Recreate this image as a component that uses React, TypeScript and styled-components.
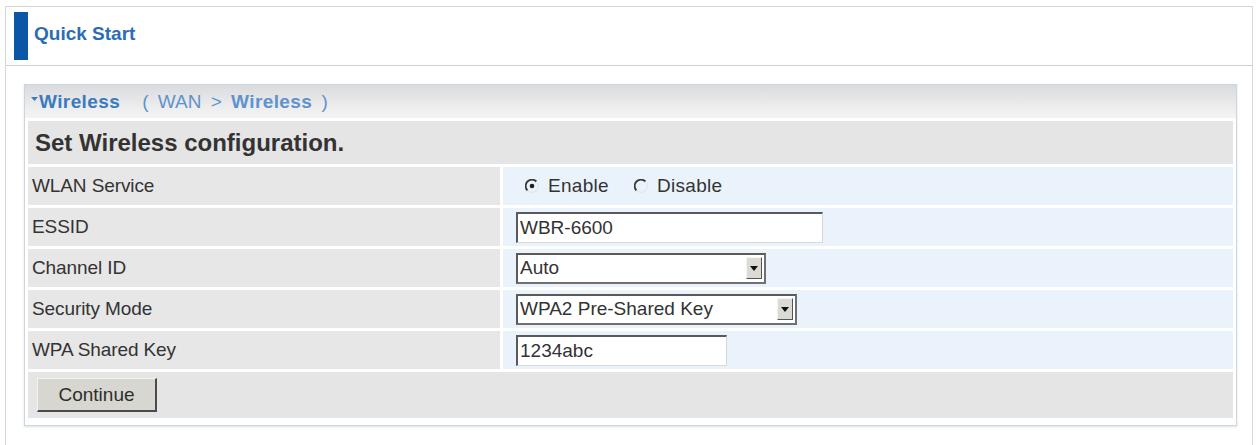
import React from "react";
import styled, { createGlobalStyle } from "styled-components";

const GlobalStyle = createGlobalStyle`
  html, body {
    margin: 0;
    padding: 0;
    background: #fff;
    font-family: "Liberation Sans", Arial, sans-serif;
  }
`;

const Frame = styled.div`
  margin: 6px 3px 0 5px;
  height: 460px;
  border: 1px solid #d6d6d6;
  border-bottom: none;
`;

const TopBar = styled.div`
  display: flex;
  align-items: center;
  gap: 6px;
  height: 58px;
  padding: 0 8px;
  border-bottom: 1px solid #d0d0d0;
`;

const Accent = styled.div`
  width: 14px;
  height: 48px;
  background: #0c56a6;
`;

const TopTitle = styled.div`
  font-size: 19px;
  font-weight: 700;
  color: #2b6db3;
  margin-top: -4px;
`;

const Panel = styled.div`
  margin: 18px 15px 0 18px;
  border: 1px solid #cdd6de;
  box-shadow: 0 1px 2px rgba(150, 170, 190, 0.35);
  background: #fff;
`;

const PanelHead = styled.div`
  display: flex;
  align-items: center;
  height: 33px;
  padding-left: 6px;
  background: linear-gradient(#dadbde, #eeeeef 70%, #f3f3f3);
  color: #3a7bc0;
  font-size: 19px;
`;

const Caret = styled.svg`
  margin-right: 1px;
  align-self: flex-start;
  margin-top: 12px;
`;

const Bold = styled.span`
  font-weight: 700;
  letter-spacing: 0.4px;
`;

const Crumb = styled.span`
  margin-left: 22px;
  color: #5f93cc;
  word-spacing: 4px;
`;

const Body = styled.div`
  display: grid;
  grid-template-columns: 472px 1fr;
  gap: 3px;
  padding: 3px 3px 7px;
`;

const Wide = styled.div<{ $h: number }>`
  grid-column: 1 / -1;
  height: ${(p) => p.$h}px;
  display: flex;
  align-items: center;
  background: #e5e5e5;
`;

const SectionTitle = styled.div`
  font-size: 24px;
  font-weight: 700;
  color: #333;
  padding-left: 7px;
`;

const Label = styled.div`
  height: 38px;
  display: flex;
  align-items: center;
  padding-left: 4px;
  background: #e7e7e7;
  color: #333;
  font-size: 19px;
  letter-spacing: -0.1px;
`;

const Value = styled.div`
  height: 38px;
  display: flex;
  align-items: center;
  padding-left: 13px;
  background: #eaf3fc;
  color: #333;
  font-size: 19px;
`;

const RadioGroup = styled.div`
  display: flex;
  align-items: center;
  padding-left: 9px;
`;

const RadioOption = styled.label`
  display: flex;
  align-items: center;
  gap: 9px;
  margin-right: 25px;
  letter-spacing: 0.3px;
`;

const TextBox = styled.div<{ $w: number }>`
  width: ${(p) => p.$w}px;
  height: 31px;
  box-sizing: border-box;
  display: flex;
  align-items: center;
  padding-left: 2px;
  background: #fff;
  border-top: 2px solid #5a5a5a;
  border-left: 2px solid #5a5a5a;
  border-right: 1px solid #d8d8d8;
  border-bottom: 1px solid #d8d8d8;
  font-size: 19px;
  color: #333;
`;

const SelectBox = styled(TextBox)`
  justify-content: space-between;
  padding-right: 2px;
  border-right: 2px solid #707070;
  border-bottom: 2px solid #707070;
`;

const Arrow = styled.div`
  width: 16px;
  height: 22px;
  box-sizing: border-box;
  display: flex;
  align-items: center;
  justify-content: center;
  background: #dcdad4;
  border-top: 1px solid #f4f4f4;
  border-left: 1px solid #f4f4f4;
  border-right: 1px solid #555;
  border-bottom: 1px solid #555;
`;

const ContinueButton = styled.button`
  margin-left: 9px;
  width: 120px;
  height: 34px;
  background: #d8d6d0;
  border-top: 1px solid #f2f2f2;
  border-left: 1px solid #f2f2f2;
  border-right: 2px solid #4a4a4a;
  border-bottom: 2px solid #4a4a4a;
  font-family: "Liberation Sans", Arial, sans-serif;
  font-size: 19px;
  color: #2e2e2e;
  padding: 0;
`;

function Radio({ checked }: { checked?: boolean }) {
  return (
    <svg width="14" height="14" viewBox="0 0 14 14">
      <path d="M11.5 2.5 A6 6 0 1 0 2.5 11.5" fill="none" stroke="#3a3a3a" strokeWidth="1.8" />
      <path d="M11.5 2.5 A6 6 0 0 1 2.5 11.5" fill="none" stroke="#e6e6e6" strokeWidth="1.2" />
      {checked && <circle cx="7" cy="7" r="2.3" fill="#1e1e1e" />}
    </svg>
  );
}

function DropArrow() {
  return (
    <svg width="8" height="5" viewBox="0 0 8 5">
      <path d="M0 0 H8 L4 5 Z" fill="#111" />
    </svg>
  );
}

const rows: { label: string; value: React.ReactNode }[] = [
  {
    label: "WLAN Service",
    value: (
      <RadioGroup>
        <RadioOption>
          <Radio checked /> Enable
        </RadioOption>
        <RadioOption>
          <Radio /> Disable
        </RadioOption>
      </RadioGroup>
    ),
  },
  { label: "ESSID", value: <TextBox $w={307}>WBR-6600</TextBox> },
  {
    label: "Channel ID",
    value: (
      <SelectBox $w={250}>
        Auto
        <Arrow>
          <DropArrow />
        </Arrow>
      </SelectBox>
    ),
  },
  {
    label: "Security Mode",
    value: (
      <SelectBox $w={281}>
        WPA2 Pre-Shared Key
        <Arrow>
          <DropArrow />
        </Arrow>
      </SelectBox>
    ),
  },
  { label: "WPA Shared Key", value: <TextBox $w={211}>1234abc</TextBox> },
];

export default function App() {
  return (
    <>
      <GlobalStyle />
      <Frame>
        <TopBar>
          <Accent />
          <TopTitle>Quick Start</TopTitle>
        </TopBar>
        <Panel>
          <PanelHead>
            <Caret width="7" height="4" viewBox="0 0 7 4">
              <path d="M0 0 H7 L3.5 4 Z" fill="#3a7bc0" />
            </Caret>
            <Bold>Wireless</Bold>
            <Crumb>
              ( WAN &gt; <Bold>Wireless</Bold> )
            </Crumb>
          </PanelHead>
          <Body>
            <Wide $h={43}>
              <SectionTitle>Set Wireless configuration.</SectionTitle>
            </Wide>
            {rows.map((r) => (
              <React.Fragment key={r.label}>
                <Label>{r.label}</Label>
                <Value>{r.value}</Value>
              </React.Fragment>
            ))}
            <Wide $h={46}>
              <ContinueButton>Continue</ContinueButton>
            </Wide>
          </Body>
        </Panel>
      </Frame>
    </>
  );
}
